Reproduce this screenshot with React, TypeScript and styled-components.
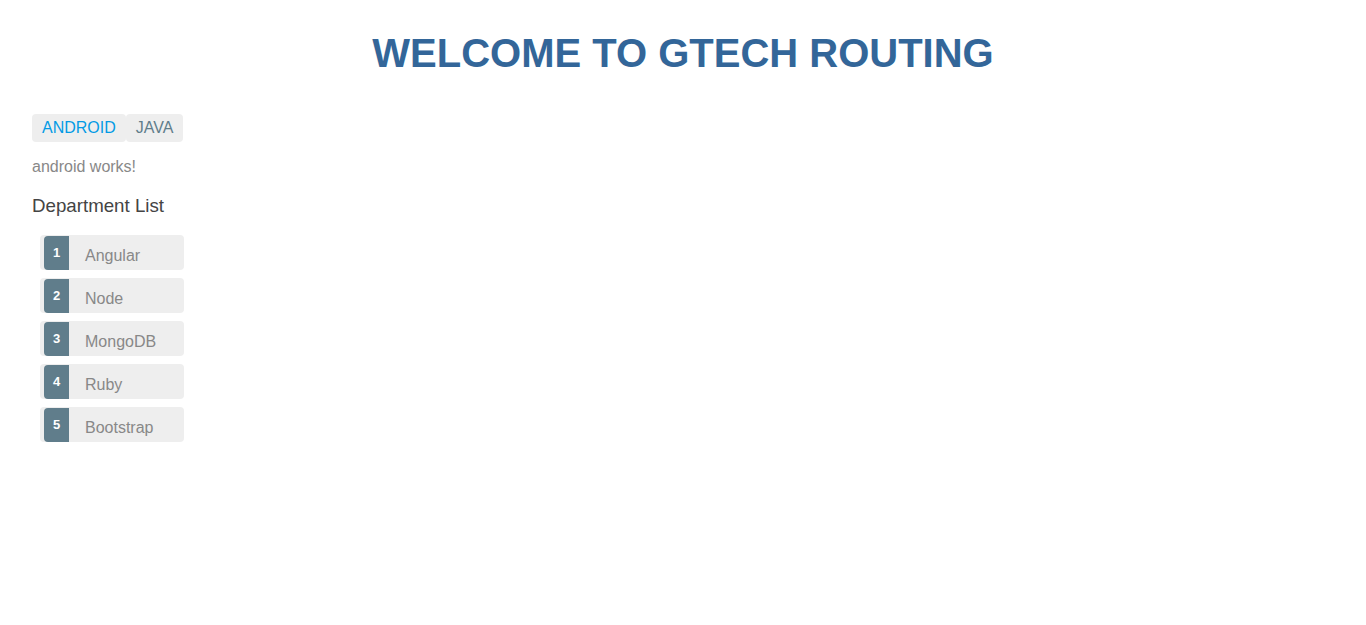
import styled, { createGlobalStyle } from "styled-components";
import { useState } from "react";

const GlobalStyle = createGlobalStyle`
  html, body {
    margin: 0;
    padding: 0;
    background: #fff;
    font-family: "Liberation Sans", Arial, sans-serif;
    color: #888;
  }
`;

const departments = [
  { id: 1, name: "Angular" },
  { id: 2, name: "Node" },
  { id: 3, name: "MongoDB" },
  { id: 4, name: "Ruby" },
  { id: 5, name: "Bootstrap" },
];

export default function App() {
  const [active, setActive] = useState<string>("android");

  return (
    <Page>
      <GlobalStyle />
      <Title>WELCOME TO GTECH ROUTING</Title>
      <Nav>
        <Tab $active={active === "android"} onClick={() => setActive("android")}>
          ANDROID
        </Tab>
        <Tab $active={active === "java"} onClick={() => setActive("java")}>
          JAVA
        </Tab>
      </Nav>
      <Works>{active} works!</Works>
      <Heading>Department List</Heading>
      <List>
        {departments.map((d) => (
          <Item key={d.id}>
            <Badge>{d.id}</Badge>
            <Name>{d.name}</Name>
          </Item>
        ))}
      </List>
    </Page>
  );
}

const Page = styled.div`
  padding: 24px 32px;
  min-height: 100vh;
  box-sizing: border-box;
`;

const Title = styled.h1`
  margin: 0;
  text-align: center;
  color: #369;
  font-size: 40px;
  line-height: 58px;
  font-weight: bold;
`;

const Nav = styled.nav`
  display: flex;
  margin-top: 32px;
`;

const Tab = styled.a<{ $active?: boolean }>`
  display: inline-block;
  padding: 5px 10px;
  font-size: 16px;
  line-height: 18px;
  background: #eee;
  border-radius: 4px;
  color: ${(p) => (p.$active ? "#039be5" : "#607d8b")};
  cursor: pointer;
  text-decoration: none;
`;

const Works = styled.p`
  margin: 16px 0 0;
  font-size: 16px;
  line-height: 18px;
  color: #888;
`;

const Heading = styled.h3`
  margin: 19px 0 0;
  font-size: 18.72px;
  line-height: 22px;
  font-weight: normal;
  color: #444;
`;

const List = styled.ul`
  list-style: none;
  margin: 18px 0 0;
  padding: 0;
  display: flex;
  flex-direction: column;
  gap: 8px;
`;

const Item = styled.li`
  display: flex;
  align-items: stretch;
  margin-left: 8px;
  width: 144px;
  height: 35px;
  background: #eee;
  border-radius: 4px;
  cursor: pointer;
`;

const Badge = styled.span`
  box-sizing: border-box;
  width: 25px;
  margin: 1px 0 0 4px;
  padding-top: 10px;
  text-align: center;
  font-size: 13px;
  line-height: 13px;
  font-weight: bold;
  color: #fff;
  background: #607d8b;
  border-radius: 4px 0 0 4px;
`;

const Name = styled.span`
  margin-left: 16px;
  padding-top: 12px;
  font-size: 16px;
  line-height: 18px;
  color: #888;
`;
